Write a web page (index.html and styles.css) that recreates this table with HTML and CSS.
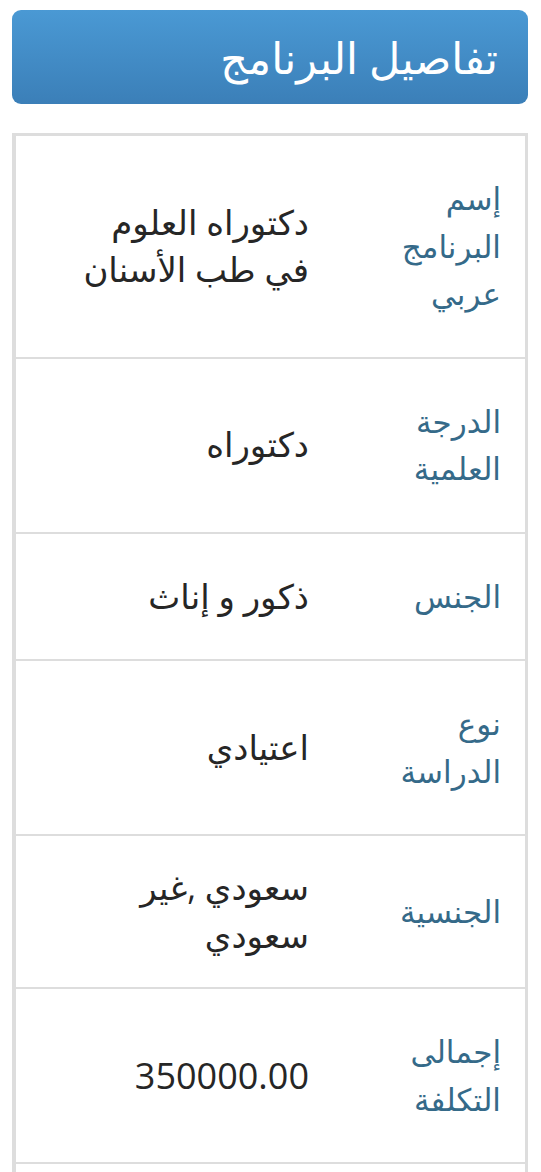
FILE: index.html
```html
<!DOCTYPE html>
<html lang="ar" dir="rtl">
<head>
  <meta charset="UTF-8" />
  <meta name="viewport" content="width=device-width, initial-scale=1.0"/>
  <title>تفاصيل البرنامج</title>
  <link rel="stylesheet" href="styles.css">
</head>
<body>
  <header class="box-title">
    <h1>تفاصيل البرنامج</h1>
  </header>

  <table class="details">
    <tbody>
      <tr>
        <th>إسم البرنامج عربي</th>
        <td>دكتوراه العلوم في طب الأسنان</td>
      </tr>
      <tr>
        <th>الدرجة العلمية</th>
        <td>دكتوراه</td>
      </tr>
      <tr>
        <th>الجنس</th>
        <td>ذكور و إناث</td>
      </tr>
      <tr>
        <th>نوع الدراسة</th>
        <td>اعتيادي</td>
      </tr>
      <tr>
        <th>الجنسية</th>
        <td>سعودي ,غير سعودي</td>
      </tr>
      <tr>
        <th>إجمالى التكلفة</th>
        <td class="num">350000.00</td>
      </tr>
      <tr>
        <th>مدة الدراسة</th>
        <td>6 سنوات</td>
      </tr>
    </tbody>
  </table>
</body>
</html>
```

FILE: styles.css
```css
body {
  font-family: "Open Sans", "DejaVu Sans", sans-serif;
  background: #fff;
  margin: 0;
  padding: 10px 13px 20px 12px;
}
.box-title {
  background: linear-gradient(#4a99d4, #3b7fb8);
  border-radius: 9px;
  height: 94px;
  display: flex;
  align-items: center;
  padding: 0 30px;
}
.box-title h1 {
  margin: 0;
  color: #fff;
  font-size: 43px;
  font-weight: normal;
}
.details {
  width: 100%;
  margin-top: 29px;
  border-collapse: collapse;
  border: 3px solid #ddd;
  border-left-width: 4px;
}
.details th,
.details td {
  text-align: right;
  vertical-align: middle;
  font-weight: normal;
  line-height: 47.5px;
  border-bottom: 2px solid #ddd;
}
.details th {
  width: 144px;
  padding: 39px 24px;
  font-size: 31px;
  color: #356a89;
}
.details td {
  padding: 28px 24px 28px 50px;
  font-size: 34px;
  color: #262626;
}
.details td.num {
  font-size: 36px;
}
```
